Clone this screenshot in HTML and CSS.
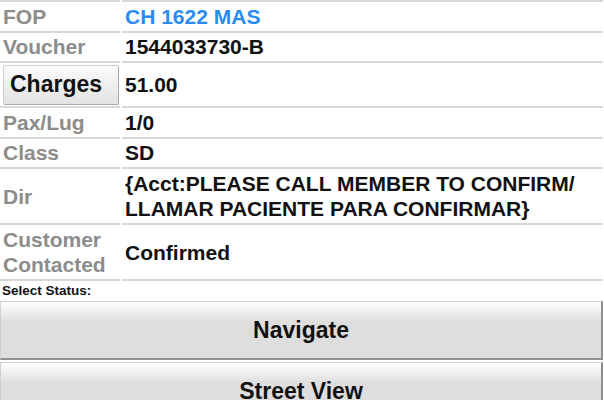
FILE: index.html
```html
<!DOCTYPE html>
<html lang="en">
  <head>
    <meta charset="UTF-8" />
    <meta name="viewport" content="width=device-width, initial-scale=1.0" />
    <title>Trip Details</title>
    <link rel="stylesheet" href="styles.css">
  </head>
  <body>
    <div class="details">
      <div class="row first">
        <div class="label">FOP</div>
        <div class="value fop">CH 1622 MAS</div>
      </div>
      <div class="row">
        <div class="label">Voucher</div>
        <div class="value">1544033730-B</div>
      </div>
      <div class="row tall">
        <div class="label btn-cell">
          <button class="charges-btn">Charges</button>
        </div>
        <div class="value">51.00</div>
      </div>
      <div class="row">
        <div class="label">Pax/Lug</div>
        <div class="value">1/0</div>
      </div>
      <div class="row">
        <div class="label">Class</div>
        <div class="value">SD</div>
      </div>
      <div class="row double">
        <div class="label">Dir</div>
        <div class="value">{Acct:PLEASE CALL MEMBER TO CONFIRM/ LLAMAR PACIENTE PARA CONFIRMAR}</div>
      </div>
      <div class="row double">
        <div class="label">Customer Contacted</div>
        <div class="value">Confirmed</div>
      </div>
    </div>

    <div class="status-label">Select Status:</div>
    <button class="status-btn">Navigate</button>
    <button class="status-btn">Street View</button>
  </body>
</html>
```

FILE: styles.css
```css
body {
  font-family: "Liberation Sans", Arial, sans-serif;
  margin: 0;
  padding: 0;
  background: #ffffff;
  color: #111;
  overflow: hidden;
}

.details {
  width: 603px;
}

.row {
  display: grid;
  grid-template-columns: 120px 1fr;
  column-gap: 2px;
}

.row > div {
  display: flex;
  align-items: center;
  min-height: 28.5px;
  padding: 0 3px;
  border-bottom: 2px solid #d9d9d9;
  font-size: 21px;
  font-weight: bold;
  line-height: 25px;
}

.row.first > div {
  border-top: 2px solid #d9d9d9;
}

.row.tall > div {
  min-height: 43px;
}

.row.double > div {
  min-height: 54px;
}

.label {
  color: #8c8c8c;
}

.value {
  color: #111;
}

.value.fop {
  color: #2a8cf0;
}

.label.btn-cell {
  padding: 0 1px 0 3px;
}

.charges-btn {
  width: 116px;
  height: 40px;
  padding: 0 6px;
  text-align: left;
  font-family: "Liberation Sans", Arial, sans-serif;
  font-size: 23px;
  font-weight: bold;
  color: #111;
  background: linear-gradient(to bottom, #fbfbfb, #e2e2e2);
  border: 1px solid #cfcfcf;
  border-right-color: #a9a9a9;
  border-bottom-color: #a9a9a9;
  border-radius: 2px;
}

.status-label {
  font-size: 13.5px;
  font-weight: bold;
  line-height: 18px;
  padding: 1px 2px 0;
  color: #111;
}

.status-btn {
  display: block;
  width: 603px;
  height: 59px;
  margin: 1px 0 2px;
  font-family: "Liberation Sans", Arial, sans-serif;
  font-size: 23px;
  font-weight: bold;
  color: #111;
  background: linear-gradient(to bottom, #ffffff 0, #dedede 20px, #dedede 100%);
  border: 1px solid #d0d0d0;
  border-right: 2px solid #8f8f8f;
  border-bottom: 2px solid #8f8f8f;
  border-radius: 0;
}
```
